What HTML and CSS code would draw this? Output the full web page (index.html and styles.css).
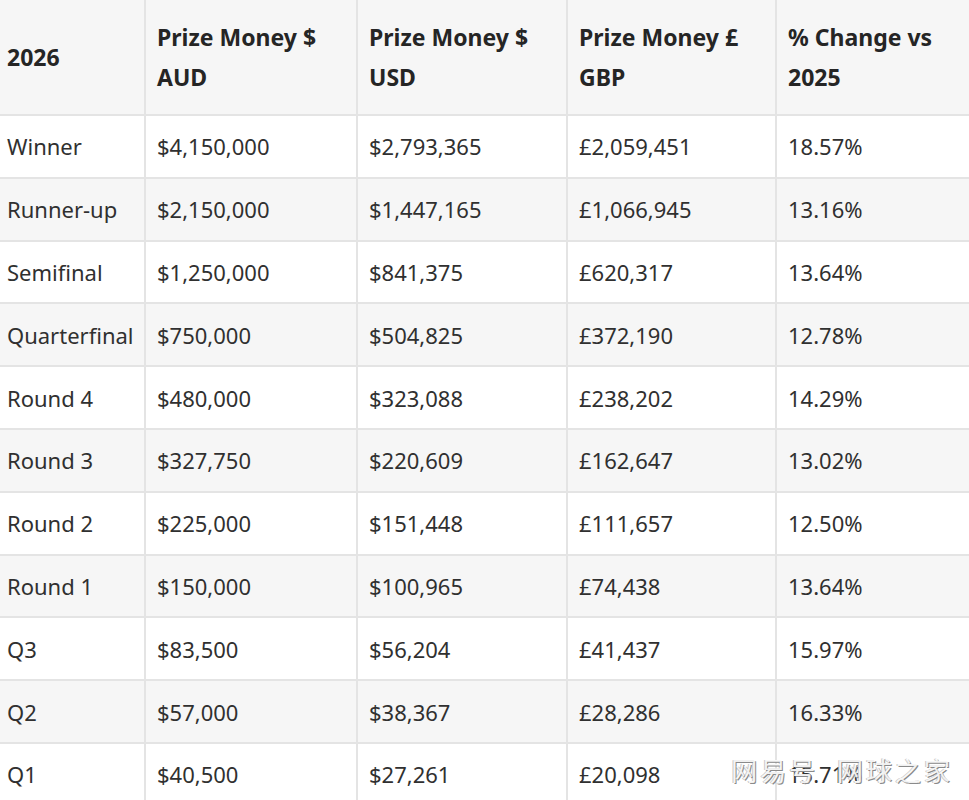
FILE: index.html
```html
<!DOCTYPE html>
<html>
<head>
<meta charset="utf-8">
<link rel="stylesheet" href="styles.css">
</head>
<body>
<div class="wrap">
<table class="prize">
  <colgroup>
    <col class="c1"><col class="c2"><col class="c3"><col class="c4"><col class="c5">
  </colgroup>
  <thead>
    <tr><th>2026</th><th>Prize Money $ AUD</th><th>Prize Money $ USD</th><th>Prize Money £ GBP</th><th>% Change vs 2025</th></tr>
  </thead>
  <tbody>
    <tr><td>Winner</td><td>$4,150,000</td><td>$2,793,365</td><td>£2,059,451</td><td>18.57%</td></tr>
    <tr><td>Runner-up</td><td>$2,150,000</td><td>$1,447,165</td><td>£1,066,945</td><td>13.16%</td></tr>
    <tr><td>Semifinal</td><td>$1,250,000</td><td>$841,375</td><td>£620,317</td><td>13.64%</td></tr>
    <tr><td>Quarterfinal</td><td>$750,000</td><td>$504,825</td><td>£372,190</td><td>12.78%</td></tr>
    <tr><td>Round 4</td><td>$480,000</td><td>$323,088</td><td>£238,202</td><td>14.29%</td></tr>
    <tr><td>Round 3</td><td>$327,750</td><td>$220,609</td><td>£162,647</td><td>13.02%</td></tr>
    <tr><td>Round 2</td><td>$225,000</td><td>$151,448</td><td>£111,657</td><td>12.50%</td></tr>
    <tr><td>Round 1</td><td>$150,000</td><td>$100,965</td><td>£74,438</td><td>13.64%</td></tr>
    <tr><td>Q3</td><td>$83,500</td><td>$56,204</td><td>£41,437</td><td>15.97%</td></tr>
    <tr><td>Q2</td><td>$57,000</td><td>$38,367</td><td>£28,286</td><td>16.33%</td></tr>
    <tr><td>Q1</td><td>$40,500</td><td>$27,261</td><td>£20,098</td><td>15.71%</td></tr>
  </tbody>
</table>
<div class="watermark">网易号 网球之家</div>
</div>
</body>
</html>
```
FILE: styles.css
```css
html, body {
  margin: 0;
  padding: 0;
  background: #ffffff;
  overflow: hidden;
}
.wrap {
  position: relative;
  width: 969px;
  height: 800px;
  overflow: hidden;
}
.prize {
  border-collapse: collapse;
  table-layout: fixed;
  width: 990px;
  font-family: "Noto Sans", "Open Sans", sans-serif;
  font-size: 22px;
  color: #303030;
}
.c1 { width: 145px; }
.c2 { width: 212px; }
.c3 { width: 210px; }
.c4 { width: 209px; }
.c5 { width: 214px; }
.prize th, .prize td {
  border: 2px solid #e4e4e4;
  text-align: left;
  vertical-align: middle;
  padding: 0 11px;
}
.prize th:first-child, .prize td:first-child {
  border-left: none;
  padding-left: 7px;
}
.prize th:last-child {
  padding-right: 30px;
}
.prize thead tr {
  height: 115px;
  background: #f6f6f6;
}
.prize th {
  border-top: none;
  font-size: 23px;
  font-weight: 700;
  line-height: 40px;
  color: #252525;
}
.prize tbody tr {
  height: 62.8px;
}
.prize td {
  line-height: 28px;
}
.prize tbody tr:nth-child(even) {
  background: #f6f6f6;
}
.watermark {
  position: absolute;
  right: 16px;
  bottom: 12px;
  font-family: "Noto Sans CJK SC", sans-serif;
  font-size: 26px;
  color: rgba(255, 255, 255, 0.88);
  text-shadow: 1px 1px 0 #8a8a8a, -1px 0 0 #c8c8c8;
  word-spacing: 10px;
  letter-spacing: 3px;
}
```
